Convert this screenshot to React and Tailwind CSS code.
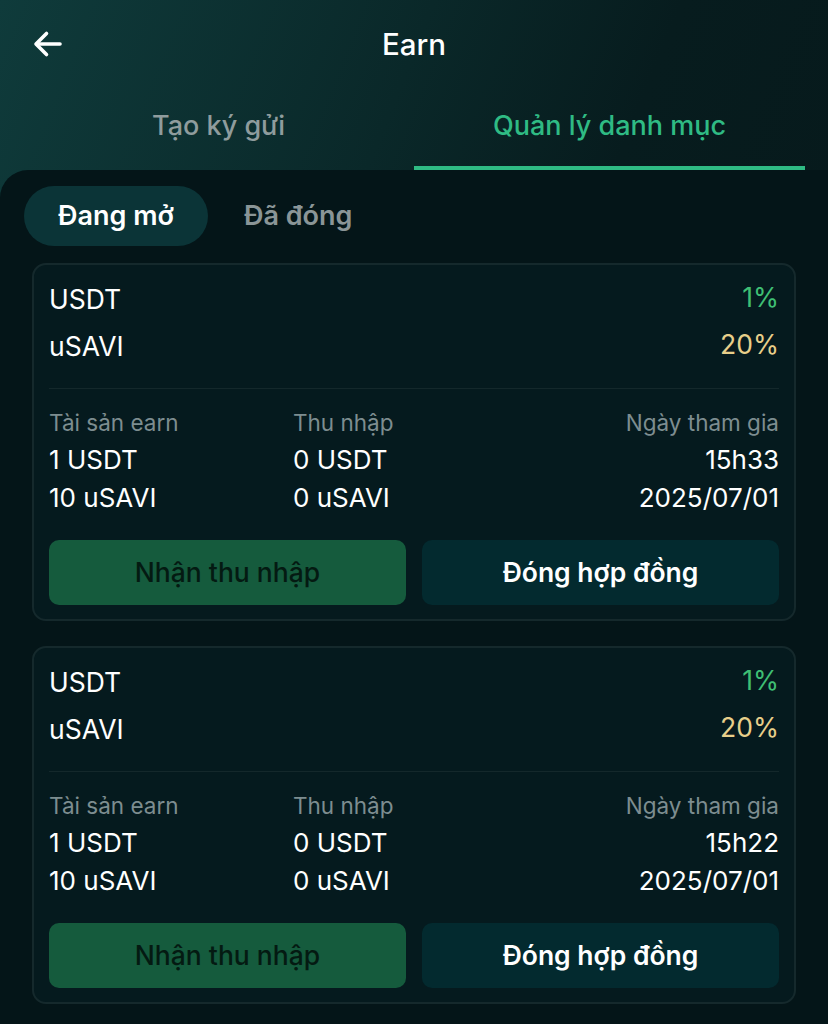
import React from "react";

const positions = [
  { time: "15h33", date: "2025/07/01" },
  { time: "15h22", date: "2025/07/01" },
];

const PositionCard = ({ item }) => (
  <div className="rounded-[14px] border-2 border-[#15292c] bg-[#051a1e] px-[15px] pt-[18px] pb-[14px]">
    <div className="flex justify-between items-center h-[34px] text-[26.5px]">
      <span className="text-white">USDT</span>
      <span className="text-[#3fbf74] -translate-y-[2px]">1%</span>
    </div>
    <div className="flex justify-between items-center h-[34px] mt-[13px] text-[26.5px]">
      <span className="text-white">uSAVI</span>
      <span className="text-[#e8cf8a] -translate-y-[2px]">20%</span>
    </div>
    <div className="h-px bg-[#14282b] mt-[24px]" />
    <div className="grid grid-cols-[244px_1fr_auto] mt-[16px] text-[26px] leading-[38px]">
      <div>
        <div className="text-[#7d8d90] text-[22.5px] leading-[36px]">Tài sản earn</div>
        <div className="text-white">1 USDT</div>
        <div className="text-white">10 uSAVI</div>
      </div>
      <div>
        <div className="text-[#7d8d90] text-[22.5px] leading-[36px]">Thu nhập</div>
        <div className="text-white">0 USDT</div>
        <div className="text-white">0 uSAVI</div>
      </div>
      <div className="text-right">
        <div className="text-[#7d8d90] text-[22.5px] leading-[36px]">Ngày tham gia</div>
        <div className="text-white">{item.time}</div>
        <div className="text-white">{item.date}</div>
      </div>
    </div>
    <div className="grid grid-cols-2 gap-[16px] mt-[23px]">
      <button className="h-[65px] rounded-[10px] bg-[#155b3d] text-[#041a12] text-[26.5px] font-medium">
        Nhận thu nhập
      </button>
      <button className="h-[65px] rounded-[10px] bg-[#032a2f] text-white text-[26.5px] font-semibold">
        Đóng hợp đồng
      </button>
    </div>
  </div>
);

const App = () => {
  const [tab, setTab] = React.useState(1);
  const [status, setStatus] = React.useState(0);

  return (
    <div
      className="min-h-screen bg-[#041518] bg-[linear-gradient(112deg,#0f3b3b_0%,#0a2829_35%,#071c1e_55%,#061719_100%)] font-['Inter','Noto_Sans',sans-serif]"
    >
      {/* header */}
      <div className="relative h-[88px] flex items-center justify-center">
        <button className="absolute left-[30px] top-[26px] text-white">
          <svg width="36" height="36" viewBox="0 0 24 24" fill="none" stroke="currentColor" strokeWidth="2.4" strokeLinecap="round" strokeLinejoin="round">
            <path d="M20 12H5" />
            <path d="M11 5l-7 7 7 7" />
          </svg>
        </button>
        <h1 className="text-white text-[29.5px] font-medium">Earn</h1>
      </div>

      {/* tabs */}
      <div className="flex px-[23px] h-[82px]">
        {["Tạo ký gửi", "Quản lý danh mục"].map((t, i) => (
          <button
            key={t}
            onClick={() => setTab(i)}
            className={
              "flex-1 flex items-center justify-center text-[27px] font-medium pb-[2px] border-b-4 " +
              (tab === i ? "text-[#2fbb84] border-[#2fbb84]" : "text-[#8f9c9d] border-transparent")
            }
          >
            {t}
          </button>
        ))}
      </div>

      {/* content */}
      <div className="bg-[#041518] rounded-tl-[28px] px-[24px] pt-[16px] pb-[20px]">
        <div className="flex items-center gap-[24px] h-[60px]">
          <button
            onClick={() => setStatus(0)}
            className={
              "h-[60px] px-[34px] rounded-full text-[27px] font-semibold " +
              (status === 0 ? "bg-[#0b3437] text-white" : "text-[#8a9597]")
            }
          >
            Đang mở
          </button>
          <button
            onClick={() => setStatus(1)}
            className={
              "h-[60px] px-[12px] rounded-full text-[27px] font-semibold " +
              (status === 1 ? "bg-[#0b3437] text-white" : "text-[#8a9597]")
            }
          >
            Đã đóng
          </button>
        </div>

        <div className="flex flex-col gap-[25px] mt-[17px] px-[8px]">
          {positions.map((p) => (
            <PositionCard key={p.time} item={p} />
          ))}
        </div>
      </div>
    </div>
  );
};

export default App;
